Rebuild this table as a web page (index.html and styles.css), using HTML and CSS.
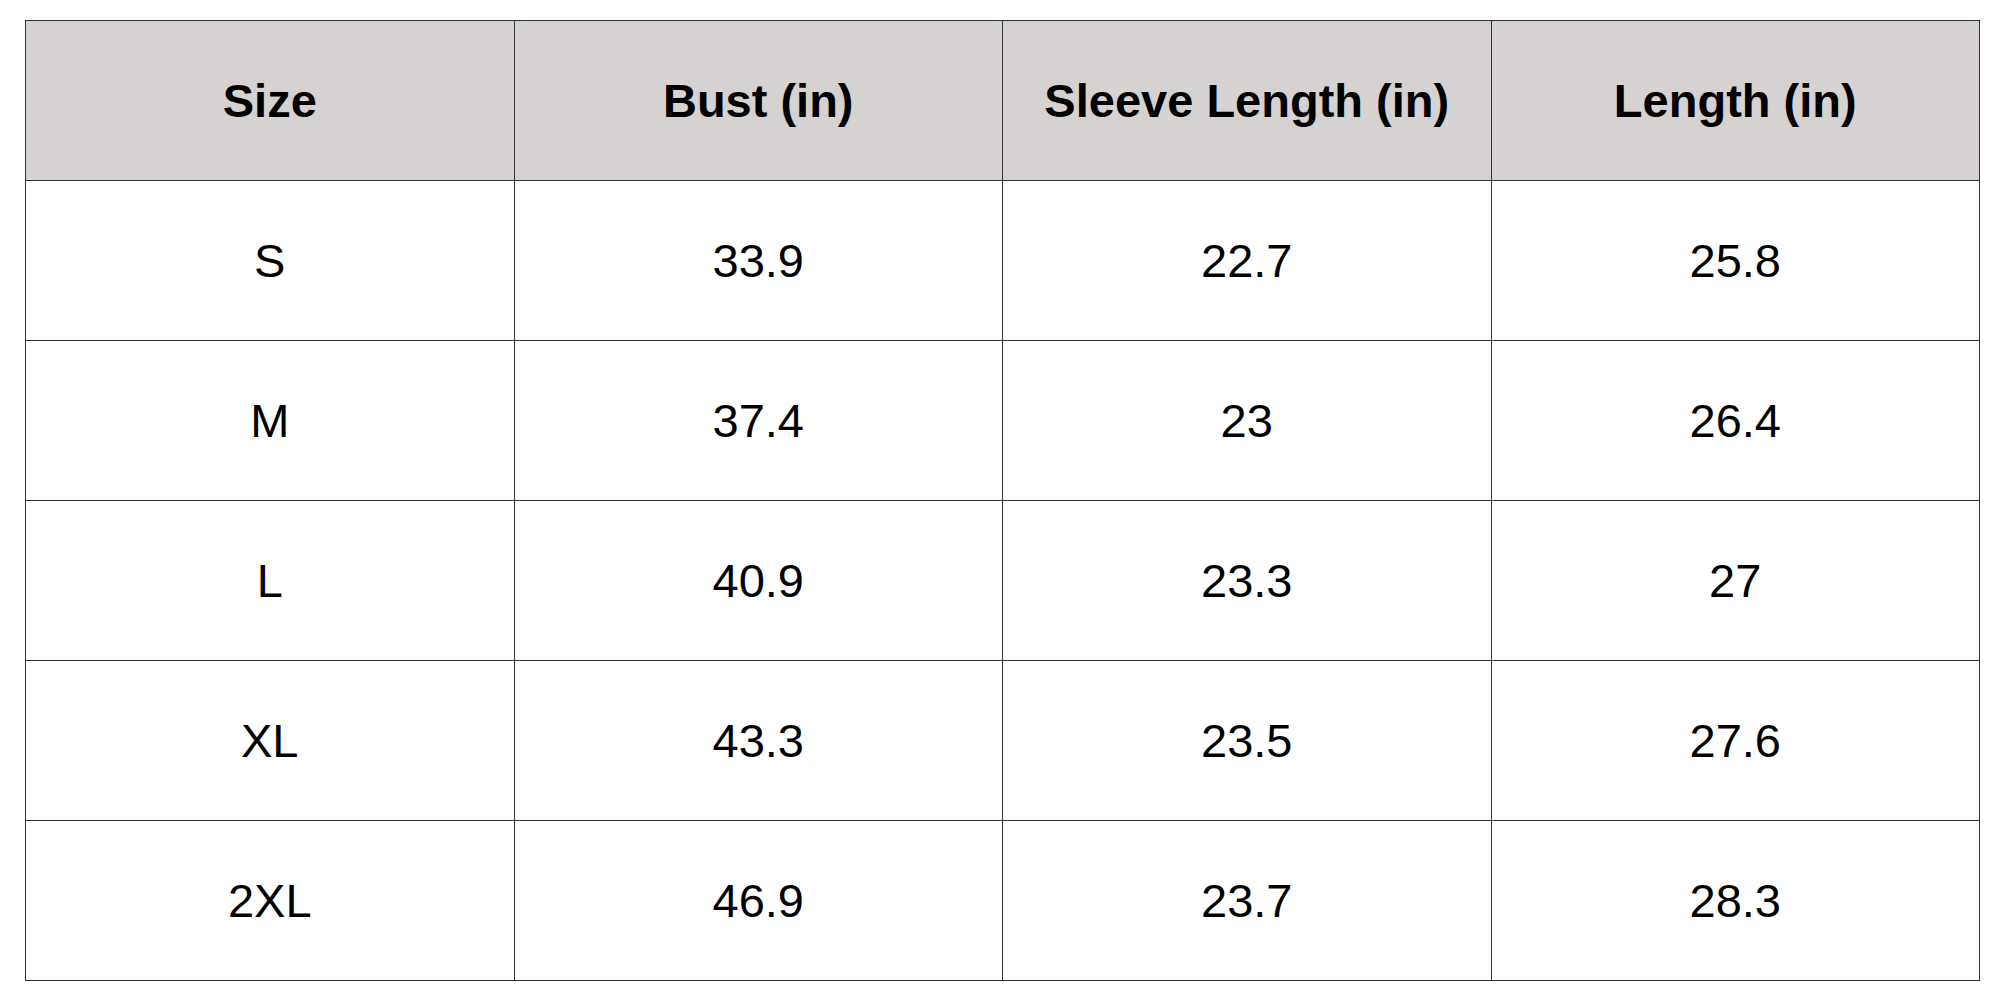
FILE: index.html
```html
<!DOCTYPE html>
<html>
<head>
<meta charset="utf-8">
<link rel="stylesheet" href="styles.css">
</head>
<body>
<table class="size-chart">
  <thead>
    <tr><th>Size</th><th>Bust (in)</th><th>Sleeve Length (in)</th><th>Length (in)</th></tr>
  </thead>
  <tbody>
    <tr><td>S</td><td>33.9</td><td>22.7</td><td>25.8</td></tr>
    <tr><td>M</td><td>37.4</td><td>23</td><td>26.4</td></tr>
    <tr><td>L</td><td>40.9</td><td>23.3</td><td>27</td></tr>
    <tr><td>XL</td><td>43.3</td><td>23.5</td><td>27.6</td></tr>
    <tr><td>2XL</td><td>46.9</td><td>23.7</td><td>28.3</td></tr>
  </tbody>
</table>
</body>
</html>
```
FILE: styles.css
```css
html, body {
  margin: 0;
  padding: 0;
  background: #ffffff;
}
body {
  padding: 20px 0 0 25px;
  font-family: "Liberation Sans", Arial, sans-serif;
  color: #000;
}
.size-chart {
  border-collapse: collapse;
  table-layout: fixed;
  width: 1955px;
}
.size-chart th,
.size-chart td {
  border: 1px solid #333;
  height: 159px;
  padding: 0;
  text-align: center;
  vertical-align: middle;
  font-size: 47px;
  line-height: 1;
}
.size-chart th {
  background: #d5d2d1;
  font-weight: 700;
}
.size-chart td {
  font-weight: 400;
}
```
